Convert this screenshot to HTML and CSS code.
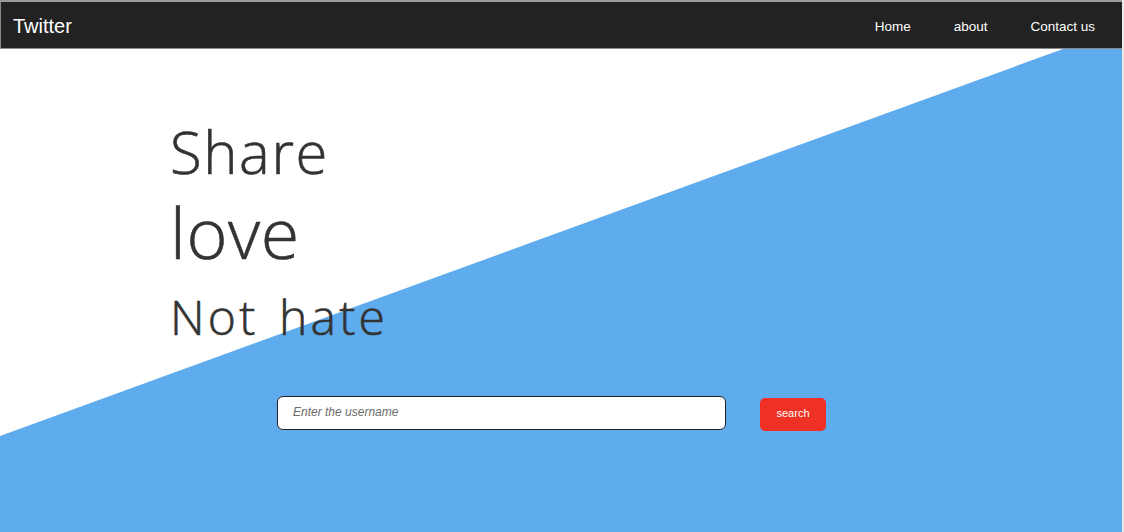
FILE: index.html
```html
<!DOCTYPE html>
<html>
<head>
<meta charset="utf-8">
<link rel="stylesheet" href="styles.css">
</head>
<body>
<div class="page">
  <nav class="navbar">
    <div class="brand">Twitter</div>
    <ul class="links">
      <li><a href="#">Home</a></li>
      <li><a href="#">about</a></li>
      <li><a href="#">Contact us</a></li>
    </ul>
  </nav>
  <section class="hero">
    <div class="headline">
      <div class="line share">Share</div>
      <div class="line love">love</div>
      <div class="line hate">Not hate</div>
    </div>
    <form class="search">
      <input class="field" type="text" placeholder="Enter the username">
      <button class="btn" type="button">search</button>
    </form>
  </section>
</div>
</body>
</html>
```
FILE: styles.css
```css
html, body {
  margin: 0;
  padding: 0;
  height: 100%;
}
body {
  background: #ececec;
  overflow: hidden;
}
.page {
  width: 1122px;
  height: 532px;
  background: #ffffff;
  display: flex;
  flex-direction: column;
  border-top: 2px solid #9a9a9a;
  box-sizing: border-box;
}
.navbar {
  height: 47px;
  flex: none;
  background: #222222;
  border-bottom: 1px solid #8a8a8a;
  border-left: 1px solid #8a8a8a;
  box-sizing: border-box;
  display: flex;
  align-items: center;
  justify-content: space-between;
  font-family: "Liberation Sans", Arial, sans-serif;
  color: #ffffff;
  padding-top: 2px;
}
.brand {
  font-size: 20px;
  padding-left: 12px;
}
.links {
  list-style: none;
  display: flex;
  margin: 0;
  padding: 0 27px 0 0;
}
.links li {
  margin-left: 43px;
}
.links a {
  color: #ffffff;
  text-decoration: none;
  font-size: 13.5px;
}
.hero {
  position: relative;
  flex: 1;
  padding-left: 170px;
  padding-top: 76px;
}
.hero::before {
  content: "";
  position: absolute;
  inset: 0;
  background: #5eabed;
  clip-path: polygon(1063px 0, 100% 0, 100% 100%, 0 100%, 0 387px);
  z-index: 0;
}
.headline {
  position: relative;
  z-index: 1;
  font-family: "Open Sans", sans-serif;
  font-weight: 300;
  -webkit-text-stroke: 0.6px #333333;
  color: #333333;
}
.line {
  line-height: 1;
}
.share {
  font-size: 58px;
  letter-spacing: 1.6px;
  margin-top: -2px;
}
.love {
  font-size: 70px;
  letter-spacing: 0.6px;
  margin-top: 16px;
}
.hate {
  font-size: 48px;
  letter-spacing: 3.2px;
  word-spacing: 5px;
  margin-top: 26px;
}
.search {
  position: relative;
  z-index: 1;
  display: flex;
  align-items: center;
  margin: 54px 0 0 107px;
  gap: 34px;
}
.field {
  width: 449px;
  height: 34px;
  box-sizing: border-box;
  border: 1px solid #222;
  border-radius: 6px;
  background: #fff;
  padding: 0 15px 2px;
  font-family: "Liberation Sans", Arial, sans-serif;
  font-size: 12px;
  font-style: italic;
  outline: none;
}
.field::placeholder {
  color: #6b6b6b;
}
.btn {
  width: 66px;
  height: 33px;
  border: none;
  border-radius: 5px;
  background: #ee3124;
  color: #ffffff;
  font-family: "Liberation Sans", Arial, sans-serif;
  font-size: 11px;
  margin-top: 3px;
  padding: 0 0 3px;
}
```
